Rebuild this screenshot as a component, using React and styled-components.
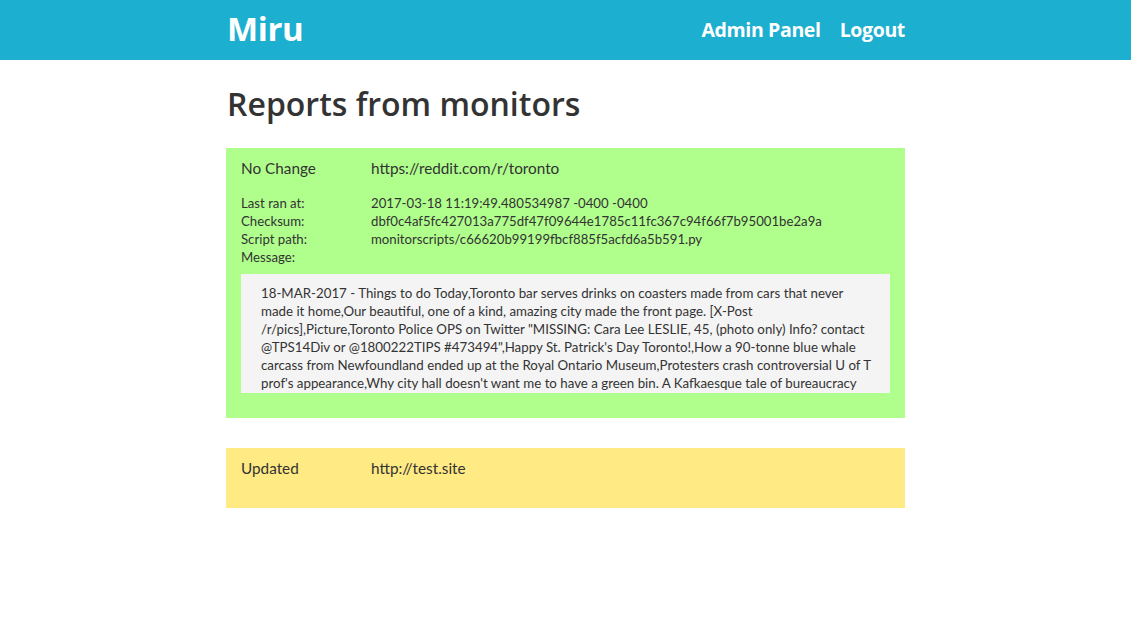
import React from "react";
import styled, { createGlobalStyle } from "styled-components";

const Global = createGlobalStyle`
  html, body { margin: 0; padding: 0; background: #fff; }
  body { font-family: "Open Sans", sans-serif; color: #333; }
`;

const Header = styled.header`
  background: #1dafcf;
  height: 60px;
`;

const Container = styled.div`
  width: 679px;
  margin: 0 auto;
`;

const HeaderInner = styled(Container)`
  display: flex;
  align-items: center;
  justify-content: space-between;
  height: 100%;
  box-sizing: border-box;
  padding-bottom: 4px;
`;

const Brand = styled.a`
  font-family: "Open Sans", sans-serif;
  font-weight: 700;
  font-size: 33px;
  color: #fff;
  text-decoration: none;
  margin-left: 1px;
  letter-spacing: -0.4px;
`;

const Nav = styled.nav`
  display: flex;
  gap: 19px;
  padding-top: 2px;
`;

const NavLink = styled.a`
  font-family: "Open Sans", sans-serif;
  font-weight: 700;
  font-size: 19.5px;
  color: #fff;
  text-decoration: none;
  letter-spacing: -0.35px;
`;

const Title = styled.h1`
  font-family: "Open Sans", sans-serif;
  font-weight: 600;
  font-size: 32px;
  color: #333;
  margin: 24px 0 24px 1px;
  line-height: 40px;
`;

const Card = styled.section`
  background: ${(p) => p.$bg};
  padding: 8px 15px ${(p) => p.$pb}px 15px;
  margin-bottom: 30px;
  font-family: Lato, sans-serif;
  color: #333;
`;

const TopRow = styled.div`
  display: grid;
  grid-template-columns: 130px 1fr;
  font-size: 15.3px;
  line-height: 24px;
`;

const Details = styled.div`
  display: grid;
  grid-template-columns: 130px 1fr;
  font-size: 13.2px;
  line-height: 18px;
  margin-top: 14px;
`;

const MessageBox = styled.div`
  background: #f4f4f4;
  margin-top: 8px;
  padding: 10px 20px 0 20px;
  height: 109px;
  overflow: hidden;
  font-size: 13.3px;
  line-height: 18px;
`;

const MessageLine = styled.div`
  white-space: nowrap;
`;

const reports = [
  {
    status: "No Change",
    url: "https://reddit.com/r/toronto",
    bg: "#b0fe8c",
    details: [
      ["Last ran at:", "2017-03-18 11:19:49.480534987 -0400 -0400"],
      ["Checksum:", "dbf0c4af5fc427013a775df47f09644e1785c11fc367c94f66f7b95001be2a9a"],
      ["Script path:", "monitorscripts/c66620b99199fbcf885f5acfd6a5b591.py"],
      ["Message:", ""],
    ],
    message: [
      "18-MAR-2017 - Things to do Today,Toronto bar serves drinks on coasters made from cars that never",
      "made it home,Our beautiful, one of a kind, amazing city made the front page. [X-Post",
      "/r/pics],Picture,Toronto Police OPS on Twitter \"MISSING: Cara Lee LESLIE, 45, (photo only) Info? contact",
      "@TPS14Div or @1800222TIPS #473494\",Happy St. Patrick's Day Toronto!,How a 90-tonne blue whale",
      "carcass from Newfoundland ended up at the Royal Ontario Museum,Protesters crash controversial U of T",
      "prof's appearance,Why city hall doesn't want me to have a green bin. A Kafkaesque tale of bureaucracy",
    ],
  },
  {
    status: "Updated",
    url: "http://test.site",
    bg: "#ffea84",
  },
];

export default function App() {
  return (
    <>
      <Global />
      <Header>
        <HeaderInner>
          <Brand href="#">Miru</Brand>
          <Nav>
            <NavLink href="#">Admin Panel</NavLink>
            <NavLink href="#">Logout</NavLink>
          </Nav>
        </HeaderInner>
      </Header>
      <Container>
        <Title>Reports from monitors</Title>
        {reports.map((r) => (
          <Card key={r.url} $bg={r.bg} $pb={r.details ? 25 : 28}>
            <TopRow>
              <span>{r.status}</span>
              <span>{r.url}</span>
            </TopRow>
            {r.details && (
              <>
                <Details>
                  {r.details.map(([k, v]) => (
                    <React.Fragment key={k}>
                      <span>{k}</span>
                      <span>{v}</span>
                    </React.Fragment>
                  ))}
                </Details>
                <MessageBox>
                  {r.message.map((line, i) => (
                    <MessageLine key={i}>{line}</MessageLine>
                  ))}
                </MessageBox>
              </>
            )}
          </Card>
        ))}
      </Container>
    </>
  );
}
